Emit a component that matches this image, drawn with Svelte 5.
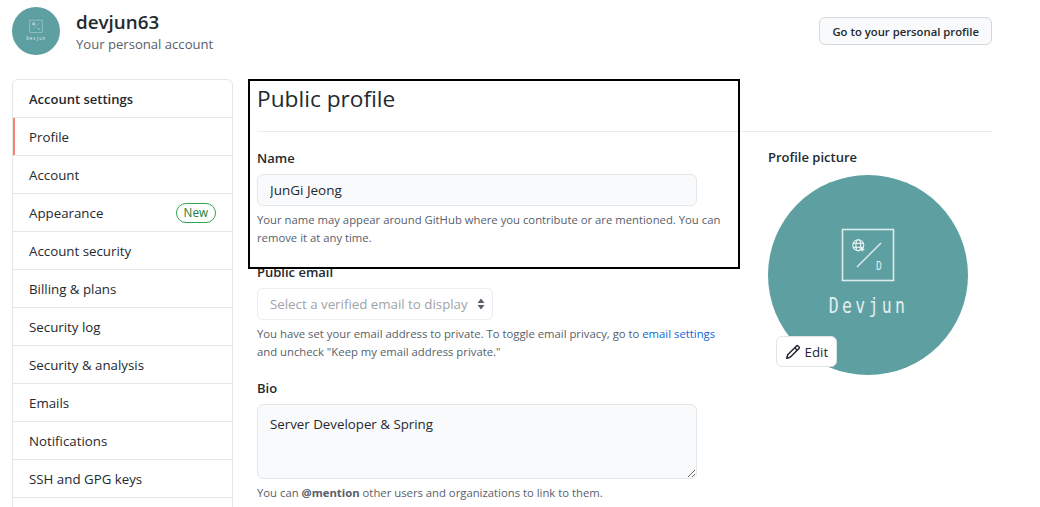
<script>
    const menu = [
        'Profile', 'Account', 'Appearance', 'Account security', 'Billing & plans',
        'Security log', 'Security & analysis', 'Emails', 'Notifications', 'SSH and GPG keys'
    ];
</script>

{#snippet logo(cls)}
    <svg class={cls} viewBox="0 0 200 200" aria-hidden="true">
        <circle cx="100" cy="100" r="100" fill="#5ea0a2" />
        <rect x="74.5" y="54.5" width="51" height="51" fill="none" stroke="#dcebeb" stroke-width="1.6" />
        <line x1="89" y1="92" x2="113" y2="68" stroke="#dcebeb" stroke-width="1.4" />
        <g fill="none" stroke="#eef6f6" stroke-width="1.1">
            <circle cx="90.3" cy="70.3" r="5.5" />
            <ellipse cx="90.3" cy="70.3" rx="2.4" ry="5.5" />
            <line x1="85" y1="68.3" x2="95.6" y2="68.3" />
            <line x1="85" y1="72.3" x2="95.6" y2="72.3" />
        </g>
        <path d="M92.5 72.5 97 74.5 95 75.2 94.3 77z" fill="#eef6f6" />
        <text class="logo-d" transform="translate(108 95) scale(.75 1)">D</text>
        <text class="logo-name" text-anchor="middle" transform="translate(100.5 138) scale(.75 1)">Devjun</text>
    </svg>
{/snippet}

<div class="page">
    <header class="account">
        {@render logo('avatar-small')}
        <div class="account-text">
            <div class="account-name">devjun63</div>
            <div class="account-sub">Your personal account</div>
        </div>
        <button class="btn profile-btn">Go to your personal profile</button>
    </header>

    <div class="layout">
        <nav class="menu">
            <div class="menu-head">Account settings</div>
            {#each menu as item, i}
                <div class="menu-item" class:selected={i === 0}>
                    <span>{item}</span>
                    {#if item === 'Appearance'}
                        <span class="badge">New</span>
                    {/if}
                </div>
            {/each}
            <div class="menu-item"></div>
        </nav>

        <main class="content">
            <h2 class="title">Public profile</h2>
            <div class="columns">
                <div class="form">
                    <div class="group">
                        <label for="name">Name</label>
                        <input id="name" class="field wide" type="text" value="JunGi Jeong" />
                        <p class="note">Your name may appear around GitHub where you contribute or are mentioned. You can remove it at any time.</p>
                    </div>
                    <div class="group">
                        <label for="email">Public email</label>
                        <div class="select-wrap">
                            <select id="email" class="field select">
                                <option>Select a verified email to display</option>
                            </select>
                            <svg class="caret" viewBox="0 0 8 12" aria-hidden="true">
                                <path d="M4 0.5 7.5 5H.5zM4 11.5.5 7h7z" fill="#57606a" />
                            </svg>
                        </div>
                        <p class="note">You have set your email address to private. To toggle email privacy, go to <a href="#settings">email settings</a> and uncheck "Keep my email address private."</p>
                    </div>
                    <div class="group">
                        <label for="bio">Bio</label>
                        <textarea id="bio" class="field wide bio">Server Developer &amp; Spring</textarea>
                        <p class="note">You can <b>@mention</b> other users and organizations to link to them.</p>
                    </div>
                </div>

                <aside class="picture">
                    <div class="picture-label">Profile picture</div>
                    <div class="picture-box">
                        {@render logo('avatar-large')}
                        <button class="btn edit-btn">
                            <svg viewBox="0 0 16 16" width="16" height="16" aria-hidden="true">
                                <path fill="#24292f" fill-rule="evenodd" d="M11.013 1.427a1.75 1.75 0 012.474 0l1.086 1.086a1.75 1.75 0 010 2.474l-8.61 8.61c-.21.21-.47.364-.756.445l-3.251.93a.75.75 0 01-.927-.928l.929-3.25a1.75 1.75 0 01.445-.758l8.61-8.61zm1.414 1.06a.25.25 0 00-.354 0L10.811 3.75l1.439 1.44 1.263-1.263a.25.25 0 000-.354l-1.086-1.086zM11.189 6.25L9.75 4.81l-6.286 6.287a.25.25 0 00-.064.108l-.558 1.953 1.953-.558a.249.249 0 00.108-.064l6.286-6.286z" />
                            </svg>
                            Edit
                        </button>
                    </div>
                </aside>
            </div>
        </main>
    </div>

    <div class="redaction"></div>
</div>

<style>
    :global(body) {
        margin: 0;
        background: #fff;
        overflow: hidden;
    }

    .page {
        position: relative;
        width: 1040px;
        height: 507px;
        overflow: hidden;
        box-sizing: border-box;
        padding: 7px 48px 0 12px;
        font-family: "Open Sans", "Noto Sans", sans-serif;
        font-size: 13.3px;
        color: #24292f;
    }

    .account {
        display: flex;
        align-items: center;
        height: 48px;
        margin-bottom: 24px;
    }

    .avatar-small {
        width: 48px;
        height: 48px;
        margin-right: 16px;
        flex: none;
    }

    .account-text {
        margin-top: -2px;
    }

    .account-name {
        font-size: 18.8px;
        font-weight: 600;
        line-height: 28px;
    }

    .account-sub {
        margin-top: -1px;
        font-size: 13.1px;
        color: #57606a;
        line-height: 18px;
    }

    .btn {
        font-family: inherit;
        color: #24292f;
        background: #f9fafb;
        border: 1px solid #d5d8da;
        border-radius: 6px;
    }

    .profile-btn {
        margin-left: auto;
        height: 28px;
        padding: 0 12px;
        font-size: 11.3px;
        font-weight: 600;
    }

    .layout {
        display: flex;
    }

    .menu {
        width: 221px;
        flex: none;
        box-sizing: border-box;
        margin-right: 24px;
        border: 1px solid #e4e7ea;
        border-radius: 6px 6px 0 0;
    }

    .menu-head {
        height: 37px;
        line-height: 39px;
        padding-left: 16px;
        font-size: 13px;
        font-weight: 600;
        border-bottom: 1px solid #e4e7ea;
    }

    .menu-item {
        display: flex;
        align-items: center;
        justify-content: space-between;
        height: 37px;
        padding: 0 16px;
        border-bottom: 1px solid #e4e7ea;
    }

    .menu-item.selected {
        box-shadow: inset 2px 0 0 #f9826c;
    }

    .badge {
        box-sizing: border-box;
        height: 20px;
        line-height: 17px;
        padding: 0 7px;
        font-size: 11.7px;
        font-weight: 500;
        color: #1a7f37;
        border: 1px solid #2da44e;
        border-radius: 20px;
    }

    .content {
        flex: 1;
        min-width: 0;
    }

    .title {
        margin: 0 0 16px;
        height: 53px;
        box-sizing: border-box;
        padding-top: 3px;
        font-size: 22.7px;
        font-weight: 400;
        line-height: 34px;
        border-bottom: 1px solid #e9ecef;
    }

    .columns {
        display: flex;
    }

    .form {
        width: 464px;
        flex: none;
        margin-right: 47px;
    }

    .group {
        margin-bottom: 17px;
    }

    .group:first-child {
        margin-bottom: 15px;
    }

    label {
        display: block;
        height: 26px;
        line-height: 20px;
        font-size: 13px;
        font-weight: 600;
    }

    .field {
        display: block;
        box-sizing: border-box;
        height: 32px;
        padding: 0 12px;
        font-family: inherit;
        font-size: 13.5px;
        color: #24292f;
        background: #f9fafb;
        border: 1px solid #e4e7ea;
        border-radius: 6px;
        outline: none;
    }

    .wide {
        width: 440px;
    }

    .select-wrap {
        position: relative;
        width: 236px;
    }

    .select {
        width: 100%;
        appearance: none;
        font-size: 13.3px;
        background: #fff;
        border-color: #eaecef;
        color: #9fa3a8;
    }

    .caret {
        position: absolute;
        right: 8px;
        top: 10px;
        width: 8px;
        height: 12px;
    }

    .bio {
        height: 75px;
        padding: 9px 12px;
        line-height: 20px;
        font-size: 13.3px;
        resize: vertical;
    }

    .note {
        margin: 5px 0 0;
        font-size: 11.3px;
        line-height: 18px;
        color: #57606a;
    }

    .note a {
        color: #0969da;
        text-decoration: none;
    }

    .picture {
        width: 200px;
        flex: none;
        margin-top: -1px;
    }

    .picture-label {
        height: 28px;
        line-height: 20px;
        font-size: 13px;
        font-weight: 600;
    }

    .picture-box {
        position: relative;
        width: 200px;
        height: 200px;
    }

    .avatar-large {
        display: block;
        width: 200px;
        height: 200px;
    }

    .logo-d {
        font-family: "DejaVu Sans Mono", monospace;
        font-size: 13px;
        fill: #dcebeb;
    }

    .logo-name {
        font-family: "DejaVu Sans Mono", monospace;
        font-size: 22px;
        letter-spacing: 4.4px;
        fill: #e2efef;
    }

    .edit-btn {
        position: absolute;
        left: 8px;
        top: 161px;
        display: flex;
        align-items: center;
        gap: 4px;
        height: 31px;
        padding: 0 7.5px;
        font-size: 13.3px;
        background: #fff;
        border-color: #e1e4e8;
    }

    .redaction {
        position: absolute;
        left: 248px;
        top: 79px;
        width: 492px;
        height: 190px;
        box-sizing: border-box;
        border: 2px solid #000;
        pointer-events: none;
    }
</style>
